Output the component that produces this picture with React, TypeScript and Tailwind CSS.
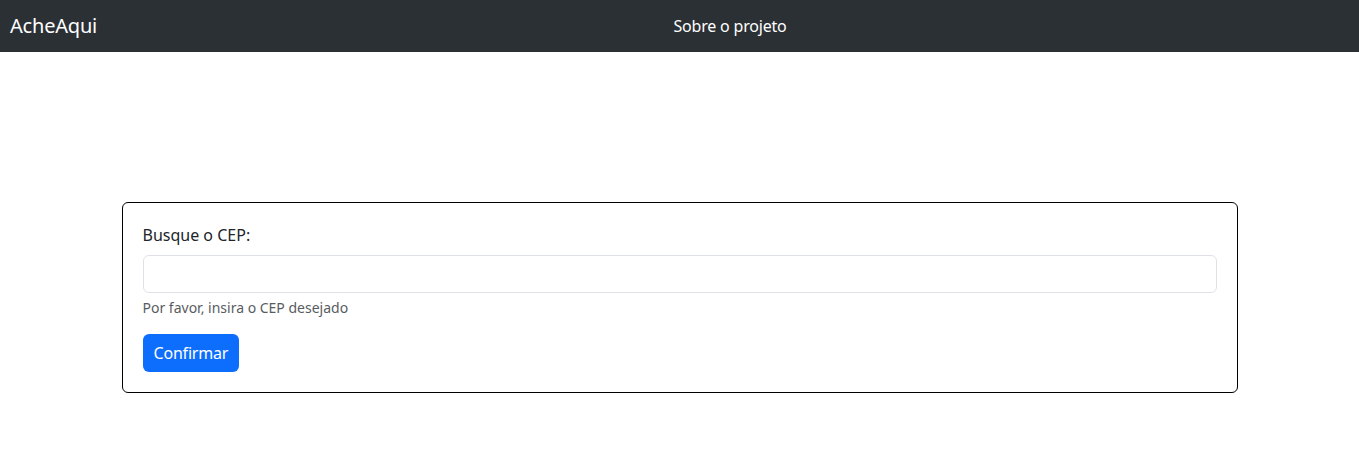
export default function App() {
  return (
    <div className="min-h-screen bg-white font-['Noto_Sans',sans-serif] text-[#212529]">
      <nav className="flex h-[52px] items-center bg-[#2b3035] px-[10px]">
        <a href="#" className="text-[20px] leading-[30px] tracking-[-0.2px] text-white">
          AcheAqui
        </a>
        <div className="flex flex-1 justify-center pl-[14px]">
          <a href="#" className="text-[16px] leading-6 tracking-[-0.2px] text-white">
            Sobre o projeto
          </a>
        </div>
      </nav>

      <div className="mx-auto mt-[150px] w-[1116px] rounded-md border border-black px-5 pb-5 pt-5">
        <label className="mb-2 block text-[16px] leading-6">Busque o CEP:</label>
        <input
          type="text"
          className="block h-[38px] w-full rounded-md border border-[#dee2e6] px-3 text-[16px] outline-none"
        />
        <div className="mt-1 text-[14px] leading-[21px] text-[#595c5f]">
          Por favor, insira o CEP desejado
        </div>
        <button className="mt-4 h-[38px] rounded-md bg-[#0d6efd] px-[11px] text-[16px] leading-6 tracking-[-0.2px] text-white">
          Confirmar
        </button>
      </div>
    </div>
  );
}
